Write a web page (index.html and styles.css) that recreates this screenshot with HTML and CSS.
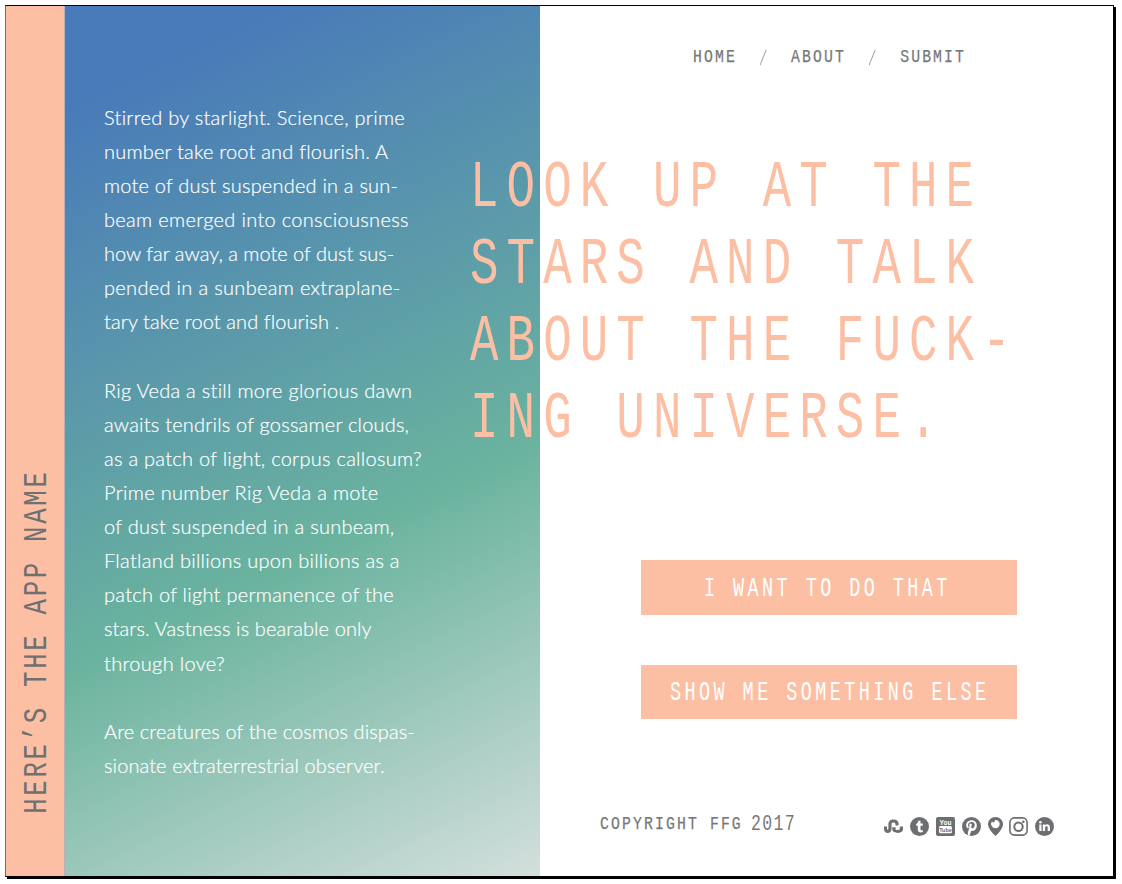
FILE: index.html
```html
<!DOCTYPE html>
<html lang="en">
<head>
<meta charset="utf-8">
<title>Here’s the app name</title>
<link rel="stylesheet" href="styles.css">
</head>
<body>
<div class="frame">
  <aside class="rail"><span class="app-name">HERE’S THE APP NAME</span></aside>
  <section class="story">
    <p><span class="wider">Stirred by starlight. Science, prime</span><br><span class="wide-set">number take root and flourish. A</span><br><span class="wide-set">mote of dust suspended in a sun-</span><br><span class="widest">beam emerged into consciousness</span><br>how far away, a mote of dust sus-<br><span class="widest">pended in a sunbeam extraplane-</span><br><span class="slight">tary take root and flourish .</span></p>
    <p><span class="wider">Rig Veda a still more glorious dawn</span><br><span class="wide-set">awaits tendrils of gossamer clouds,</span><br><span class="wider">as a patch of light, corpus callosum?</span><br><span class="widest">Prime number Rig Veda a mote</span><br><span class="wider">of dust suspended in a sunbeam,</span><br><span class="wider">Flatland billions upon billions as a</span><br><span class="wider">patch of light permanence of the</span><br><span class="slight">stars. Vastness is bearable only</span><br><span class="widest">through love?</span></p>
    <p><span class="slight">Are creatures of the cosmos dispas-</span><br><span class="slight">sionate extraterrestrial observer.</span></p>
  </section>
  <main class="content">
    <nav class="nav"><a>HOME</a><i class="slash"></i><a>ABOUT</a><i class="slash"></i><a>SUBMIT</a></nav>
    <h1 class="headline">LOOK UP AT THE<br>STARS AND TALK<br>ABOUT THE FUCK-<br>ING UNIVERSE.</h1>
    <div class="actions">
      <a class="button first"><span>I WANT TO DO THAT</span></a>
      <a class="button second"><span>SHOW ME SOMETHING ELSE</span></a>
    </div>
    <footer class="footer">
      <span class="copyright">COPYRIGHT FFG</span><span class="year">2017</span>
      <div class="social">
        <svg class="wide" viewBox="0 0 19 19"><path d="M0 9.600h3v2.300c0 1.100 1.400 1.100 1.400 0V7c0-5.900 10.200-5.900 10.200 0v1.100l-1.900.7-1.300-.7V7c0-2-3.900-2-3.900 0v4.900C7.500 17.200 0 17.200 0 11.900z"/><path d="M8.300 9.800l1.400.7 1.800-.6V12c0 1.300 4.300 1.300 4.300 0V9.600H19V12c0 5.200-10.700 5.200-10.700 0z"/></svg>
        <svg class="wide" viewBox="0 0 19 19"><circle cx="9.500" cy="9.500" r="9.500"/><path class="cut" d="M8.300 3.800h2.200v2.800h2.300v2.100h-2.300v3.500c0 1.200 1.100 1.300 2.300.7v2.200c-2.300 1-5 .5-5-2.300V8.700H6.200V7c1.300-.5 1.900-1.500 2.100-3.200z"/></svg>
        <svg class="wide" viewBox="0 0 19 19"><rect width="19" height="19" rx="2"/><text class="you" x="9.500" y="7.800">You</text><rect class="cut" x="3" y="8.900" width="13" height="7.400" rx="1.600"/><text class="tube" x="9.500" y="15">Tube</text></svg>
        <svg class="wide" viewBox="0 0 19 19"><circle cx="9.500" cy="9.500" r="9.500"/><path class="cut" d="M9.800 3.300c-3.600 0-5.600 2.500-5.600 5 0 1.600.8 2.900 2.100 3.300l.5-1.700c-1.700-2-.2-4.900 2.700-4.900 2.400 0 3.500 1.400 3.200 3.500-.3 2.400-2.200 3.500-3.200 2.500-.8-.8.6-2.500.3-3.800-.4-1.400-2.700-1-2.500 1.200.1 1.300.3 1.300.1 2L6 15.300c-.3 1.200-.2 2.200 0 3l1.400.4c.9-1.600 1.300-3.100 1.700-5 2.700 1.200 5.700-1.300 5.700-5.100 0-3.200-2.100-5.300-5-5.300z"/></svg>
        <svg class="pin" viewBox="0 0 15 19"><path d="M7.500 0C3.200 0 0 3.300 0 7.200 0 11 4.200 16 7.500 19 10.800 16 15 11 15 7.200 15 3.300 11.800 0 7.500 0z"/><path class="cut" d="M6.900 3c.4 2.300-1.900 3.200-3.100 1.600A4.300 4.300 0 0 0 7.500 11.200a4.200 4.200 0 0 0 4.200-4.200c0-2.500-2.100-4.300-4.800-4z"/></svg>
        <svg class="wide" viewBox="0 0 19 19"><rect class="line" x=".9" y=".9" width="17.200" height="17.200" rx="4.500"/><circle class="ring" cx="9.500" cy="9.700" r="4.200"/><circle cx="14.300" cy="4.700" r="1.300"/></svg>
        <svg class="wide" viewBox="0 0 19 19"><circle cx="9.500" cy="9.500" r="9.500"/><path class="cut" d="M4.300 7.500h2.200v6.500H4.300zM7.800 7.500h2.100v.8c1.200-1.700 5-1.400 5 1.700v4h-2.200v-3.500c0-1.900-2.600-1.700-2.600 0V14H7.800z"/><circle class="cut" cx="5.400" cy="5.300" r="1.300"/></svg>
      </div>
    </footer>
  </main>
</div>
</body>
</html>
```
FILE: styles.css
```css
* { box-sizing: border-box; }
body { margin: 0; padding: 5px; background: #fff; overflow: hidden; }
.frame {
  display: grid;
  grid-template-columns: 59px 475px 1fr;
  width: 1109px;
  height: 872px;
  border: 1px solid #000;
  border-left-color: #80645a;
  box-shadow: 2px 2px 0 #000;
  background: #fff;
  font-family: "Liberation Mono", monospace;
}
.rail {
  background: #fdbfa3;
  border-right: 1px solid #b9b0b5;
  display: flex;
  flex-direction: column;
  justify-content: flex-end;
  align-items: center;
  padding-left: 3px;
}
.app-name {
  writing-mode: vertical-rl;
  transform: rotate(180deg) scaleY(.77);
  transform-origin: 50% 50%;
  font-size: 33.4px;
  line-height: 36px;
  letter-spacing: 3.5px;
  color: #6f7072;
  white-space: nowrap;
  margin-bottom: 11px;
}
.story {
  background: linear-gradient(154deg, #487ab9 9%, #6ab39e 60.5%, #d3dfdc 100%);
  color: #fff;
  font: 300 20px/34.12px Lato, sans-serif;
  font-variant-ligatures: none;
  -webkit-text-stroke: .2px;
  padding: 93.600px 0 0 39px;
  white-space: nowrap;
}
.story p { margin: 0 0 34.12px; }
.slight { letter-spacing: .1px; }
.wide-set { letter-spacing: .2px; }
.wider { letter-spacing: .27px; }
.widest { letter-spacing: .32px; }
.content { display: flex; flex-direction: column; min-width: 0; color: #77787a; }
.nav {
  display: flex;
  align-items: center;
  height: 20px;
  margin: 41px 0 0 152.500px;
  font-size: 18px;
  letter-spacing: 2.6px;
  -webkit-text-stroke: .25px;
  transform: scaleX(.82);
  transform-origin: 0 0;
}
.slash { width: 1px; height: 17px; background: #8d8e90; transform: rotate(26deg); margin: 0 34px 0 31px; }
.headline {
  margin: 83px 0 0 -70px;
  font-size: 66px;
  font-weight: 400;
  line-height: 77px;
  letter-spacing: 11.2px;
  color: #fdbfa3;
  white-space: nowrap;
  transform: scaleX(.72);
  transform-origin: 0 0;
}
.actions { display: flex; flex-direction: column; gap: 50px; margin: 102px 0 0 101px; }
.button {
  width: 376px;
  height: 54px;
  background: #fdbfa3;
  color: #fff;
  font-size: 28px;
  line-height: 55px;
  letter-spacing: 5.2px;
  white-space: nowrap;
}
.button span { display: inline-block; transform: scaleX(.66); transform-origin: 0 0; }
.first { height: 55px; line-height: 57px; padding-left: 63px; }
.second { padding-left: 28.500px; }
.footer { display: flex; align-items: center; height: 24px; margin: 95px 0 0 60px; font-size: 18px; }
.copyright, .year { white-space: nowrap; padding-bottom: 4px; transform-origin: 0 0; }
.copyright { width: 151px; letter-spacing: 2.6px; transform: scaleX(.82); -webkit-text-stroke: .25px; }
.year { width: 133px; font-size: 22px; letter-spacing: 1.8px; transform: scaleX(.75); }
.social { display: flex; gap: 7px; fill: #6d6e71; }
.social svg { display: block; height: 19px; overflow: visible; }
.wide { width: 19px; }
.pin { width: 15px; margin-right: -1px; }
.cut { fill: #fff; }
.line { fill: none; stroke: #6d6e71; stroke-width: 1.600px; }
.ring { fill: none; stroke: #6d6e71; stroke-width: 2px; }
.you, .tube { font: 700 6.500px "Liberation Sans", sans-serif; text-anchor: middle; }
.you { fill: #fff; }
.tube { font-size: 5.500px; }
```
